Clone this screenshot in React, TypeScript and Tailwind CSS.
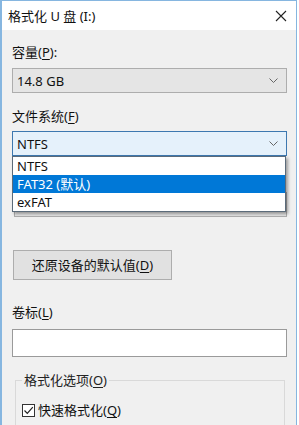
import React from "react";

const Chevron = () => (
  <svg width="9" height="5" viewBox="0 0 9 5" className="shrink-0">
    <path d="M0.5 0.5 L4.5 4.5 L8.5 0.5" fill="none" stroke="#666" strokeWidth="1" />
  </svg>
);

const Key = ({ k }: { k: string }) => <span className="underline underline-offset-2">{k}</span>;

const Combo = ({ value, focused, hidden }: { value: string; focused?: boolean; hidden?: boolean }) => (
  <div
    className={`flex h-[25px] items-center justify-between border pl-[4px] pr-[8px] text-[13px] leading-[16px] ${
      focused ? "border-[#3d78b0] bg-[#e5f1fb]" : "border-[#adadad] bg-[#e5e5e5]"
    }`}
  >
    <span className={hidden ? "invisible" : ""}>{value}</span>
    <Chevron />
  </div>
);

export default function App() {
  const items = ["NTFS", "FAT32 (默认)", "exFAT"];
  return (
    <div className="h-[425px] w-[299px] overflow-hidden bg-white font-['Noto_Sans','Noto_Sans_CJK_SC',sans-serif] text-[#111]">
      <div className="h-[425px] w-[297px] border-l-2 border-r border-t border-[#86b6e0] bg-[#f0f0f0]">
        {/* title bar */}
        <div className="flex h-[29px] items-center justify-between bg-white pl-[6px] pr-[9px]">
          <span className="text-[13px] leading-[16px]">格式化 U 盘 (I:)</span>
          <svg width="12" height="12" viewBox="0 0 12 12">
            <path d="M1 1 L11 11 M11 1 L1 11" stroke="#222" strokeWidth="1.1" />
          </svg>
        </div>

        <div className="pl-[10px] pr-[9px]">
          <div className="mt-[14px] text-[13px] leading-[16px]">
            容量(<Key k="P" />):
          </div>
          <div className="mt-[8px]">
            <Combo value="14.8 GB" />
          </div>

          <div className="mt-[15px] text-[13px] leading-[16px]">
            文件系统(<Key k="F" />)
          </div>
          <div className="relative mt-[7px]">
            <Combo value="NTFS" focused />
            <div className="absolute left-0 right-[1px] top-full z-10 border border-[#5b6b7a] bg-white text-[13px] leading-[16px] shadow-[2px_2px_3px_rgba(0,0,0,0.35)]">
              {items.map((it, i) => (
                <div
                  key={it}
                  className={`flex h-[18px] items-center pl-[4px] ${
                    i === 1 ? "bg-[#0078d7] text-white" : ""
                  }`}
                >
                  {it}
                </div>
              ))}
            </div>
          </div>

          {/* covered by the open list */}
          <div className="invisible mt-[12px] text-[13px] leading-[16px]">
            分配单元大小(<Key k="A" />)
          </div>
          <div className="mt-[8px] pl-[2px]">
            <Combo value="4096 字节" hidden />
          </div>

          <button className="ml-[1px] mt-[33px] flex h-[30px] w-[159px] items-center justify-center border border-[#adadad] bg-[#e1e1e1] text-[13px] leading-[16px]">
            还原设备的默认值(<Key k="D" />)
          </button>

          <div className="mt-[24px] text-[13px] leading-[16px]">
            卷标(<Key k="L" />)
          </div>
          <div className="mt-[9px] h-[28px] border border-[#9a9a9a] bg-white" />

          <fieldset className="ml-[3px] mr-[2px] mt-[15px] h-[80px] border border-[#d9d9d9] px-[6px]">
            <legend className="px-[2px] text-[13px] leading-[16px] text-[#222]">
              格式化选项(<Key k="O" />)
            </legend>
            <div className="mt-[14px] flex items-center gap-[3px] text-[13px] leading-[16px]">
              <span className="flex h-[13px] w-[13px] items-center justify-center border border-[#333] bg-white">
                <svg width="11" height="11" viewBox="0 0 11 11">
                  <path d="M1.5 5.5 L4.3 8.3 L9.8 2.2" fill="none" stroke="#222" strokeWidth="1.2" />
                </svg>
              </span>
              <span>
                快速格式化(<Key k="Q" />)
              </span>
            </div>
          </fieldset>
        </div>
      </div>
    </div>
  );
}
